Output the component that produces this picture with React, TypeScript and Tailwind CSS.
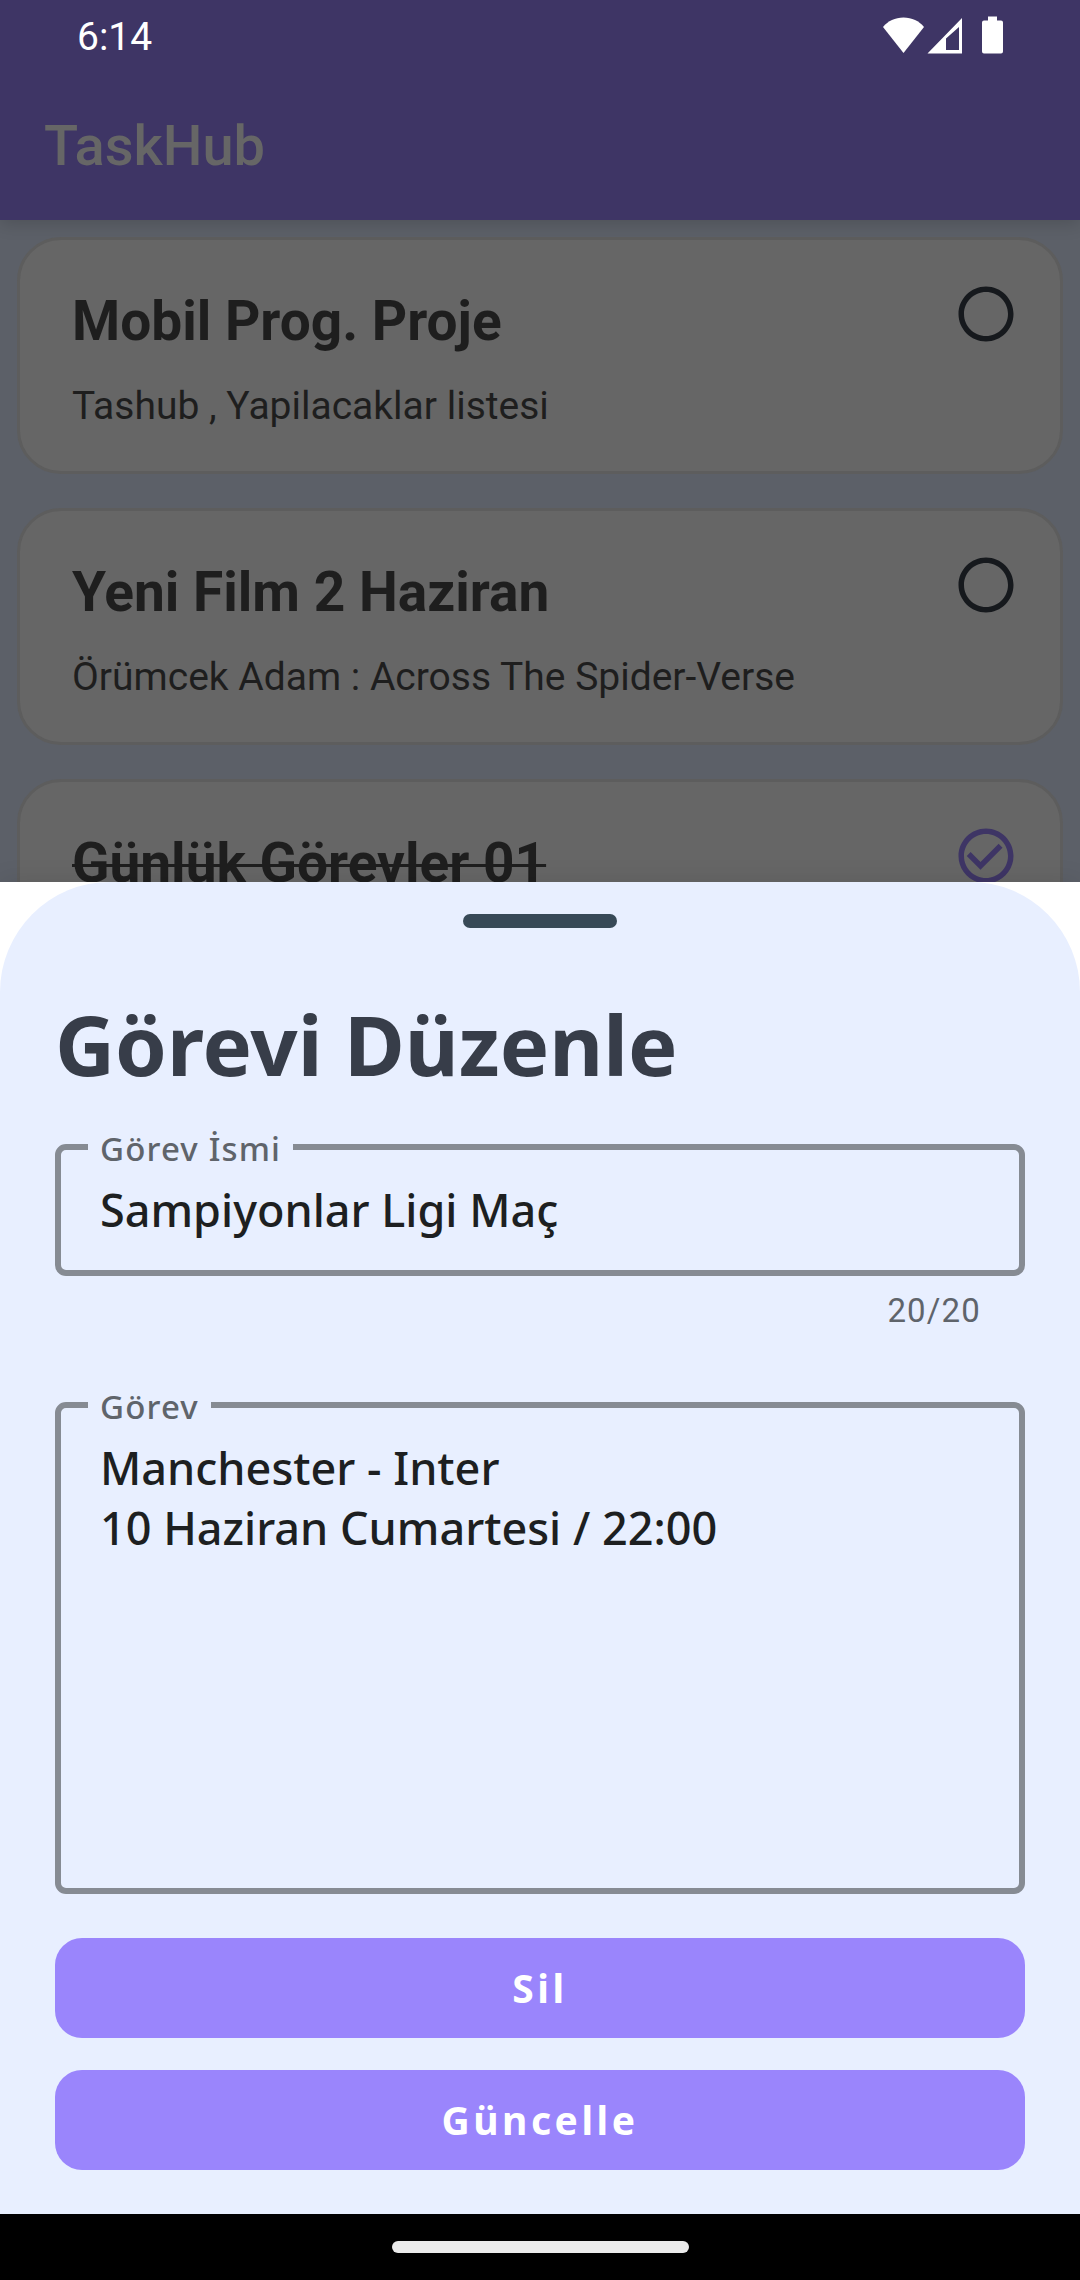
import { useState } from "react";

type Task = { id: string; title: string; note?: string; done: boolean };

const TASKS: Task[] = [
  { id: "t1", title: "Mobil Prog. Proje", note: "Tashub , Yapilacaklar listesi", done: false },
  { id: "t2", title: "Yeni Film 2 Haziran", note: "Örümcek Adam : Across The Spider-Verse", done: false },
  { id: "t3", title: "Günlük Görevler 01", done: true },
];

function StatusIcons() {
  return (
    <svg viewBox="0 0 120 38" className="h-[38px] w-[120px] fill-white" aria-hidden="true">
      <path d="M0 11C5 5 12 1.500 20.500 1.500S36 5 41 11L20.500 37z" />
      <path
        fillRule="evenodd"
        d="M44.500 37.500L79 2V37.500zM63 22.500V34H76V11z"
      />
      <path d="M105 0.500h9v4h4a2 2 0 0 1 2 2v29a2 2 0 0 1-2 2h-17a2 2 0 0 1-2-2V6.500a2 2 0 0 1 2-2h4z" />
    </svg>
  );
}

function TaskCard({ task, onToggle }: { task: Task; onToggle: () => void }) {
  return (
    <li className="flex min-h-[237px] shrink-0 items-start justify-between rounded-[44px] border-[3px] border-[#5d5d5d] bg-[#666666] pt-[41px] pr-[41px] pb-[42px] pl-[52px] text-[#1e1e1e]">
      <div className="pt-2">
        <h2 className={task.done ? "text-[55px] leading-[64px] font-bold line-through decoration-[3px]" : "text-[55px] leading-[64px] font-bold"}>
          {task.title}
        </h2>
        {task.note && <p className="mt-[30px] text-[39px] leading-[46px]">{task.note}</p>}
      </div>
      <div className="grid size-[66px] shrink-0">
        <input
          type="checkbox"
          aria-label={task.title}
          checked={task.done}
          onChange={onToggle}
          className="col-start-1 row-start-1 size-full appearance-none rounded-full"
        />
        <svg
          viewBox="0 0 24 24"
          aria-hidden="true"
          className={
            task.done
              ? "pointer-events-none col-start-1 row-start-1 size-full fill-[#3e3565]"
              : "pointer-events-none col-start-1 row-start-1 size-full fill-[#16191d]"
          }
        >
          <path d="M12 2C6.480 2 2 6.480 2 12s4.480 10 10 10 10-4.480 10-10S17.520 2 12 2zm0 18c-4.420 0-8-3.580-8-8s3.580-8 8-8 8 3.580 8 8-3.580 8-8 8z" />
          {task.done && <path d="M16.590 7.580L10 14.170l-3.590-3.580L5 12l5 5 8-8z" />}
        </svg>
      </div>
    </li>
  );
}

const fieldBox = "min-w-0 rounded-[11px] border-[6px] border-[#868b93] pr-[39px] pb-[30px] pl-[27px]";
const legendText = "px-3 pt-1 text-[33px] leading-[44px] font-medium tracking-[0.035em] text-[#5f646b]";
const fieldText =
  "mt-[9px] block w-full resize-none bg-transparent pl-3 text-[45px] leading-[60px] font-medium text-[#1d1f21] outline-none";
const actionButton =
  "h-[100px] rounded-[27px] bg-[#9a85fc] text-[39px] leading-[52px] font-bold tracking-[0.09em] text-white";

export default function App() {
  const [tasks, setTasks] = useState(TASKS);
  const [name, setName] = useState("Sampiyonlar Ligi Maç");
  const [body, setBody] = useState("Manchester - Inter\n10 Haziran Cumartesi / 22:00");

  const toggle = (id: string) =>
    setTasks((all) => all.map((t) => (t.id === id ? { ...t, done: !t.done } : t)));

  return (
    <div className="flex min-h-screen flex-col bg-[#5c6068] font-[Roboto,sans-serif]">
      <header className="z-10 bg-[#3e3565] pb-[42px] shadow-[0_4px_16px_rgba(0,0,0,0.15)]">
        <div className="flex items-start justify-between pt-[13px] pr-[77px] pl-[77px]">
          <time className="text-[39px] leading-[48px] text-white">6:14</time>
          <div className="pt-[3px]">
            <StatusIcons />
          </div>
        </div>
        <h1 className="mt-[53px] px-11 text-[56px] leading-[64px] font-medium text-[#666666]">TaskHub</h1>
      </header>

      <main className="min-h-[240px] flex-1 basis-0 overflow-hidden">
        <ul className="flex h-0 flex-col gap-[34px] px-[17px] pt-[17px]">
          {tasks.map((t) => (
            <TaskCard key={t.id} task={t} onToggle={() => toggle(t.id)} />
          ))}
        </ul>
      </main>

      <section role="dialog" aria-labelledby="sheet-title" className="z-10 bg-white font-['Noto_Sans',sans-serif] shadow-[0_0_24px_rgba(0,0,0,0.1)]">
        <form
          onSubmit={(e) => e.preventDefault()}
          className="flex flex-col rounded-t-[110px] bg-[#e8efff] px-[55px] pt-8 pb-11"
        >
          <div className="h-[14px] w-[154px] self-center rounded-full bg-[#374957]" />
          <h2 id="sheet-title" className="mt-[60px] text-[83px] leading-[112px] font-bold text-[#373d49]">
            Görevi Düzenle
          </h2>

          <fieldset className={"mt-[23px] " + fieldBox}>
            <legend className={legendText}>
              <label htmlFor="task-name">Görev İsmi</label>
            </legend>
            <input
              id="task-name"
              type="text"
              maxLength={20}
              value={name}
              onChange={(e) => setName(e.target.value)}
              className={fieldText}
            />
          </fieldset>
          <output
            htmlFor="task-name"
            className="mt-[15px] pr-11 text-right font-[Roboto,sans-serif] text-[33px] leading-[40px] tracking-[0.035em] text-[#5f646b]"
          >
            {name.length}/20
          </output>

          <fieldset className={"mt-[50px] " + fieldBox}>
            <legend className={legendText}>
              <label htmlFor="task-body">Görev</label>
            </legend>
            <textarea
              id="task-body"
              rows={7}
              value={body}
              onChange={(e) => setBody(e.target.value)}
              className={fieldText}
            />
          </fieldset>

          <div className="mt-11 flex flex-col gap-8">
            <button type="button" className={actionButton}>
              Sil
            </button>
            <button type="submit" className={actionButton}>
              Güncelle
            </button>
          </div>
        </form>
      </section>

      <footer className="z-10 flex h-[66px] items-center justify-center bg-black">
        <div className="h-3 w-[297px] rounded-full bg-[#ebebeb]" />
      </footer>
    </div>
  );
}
